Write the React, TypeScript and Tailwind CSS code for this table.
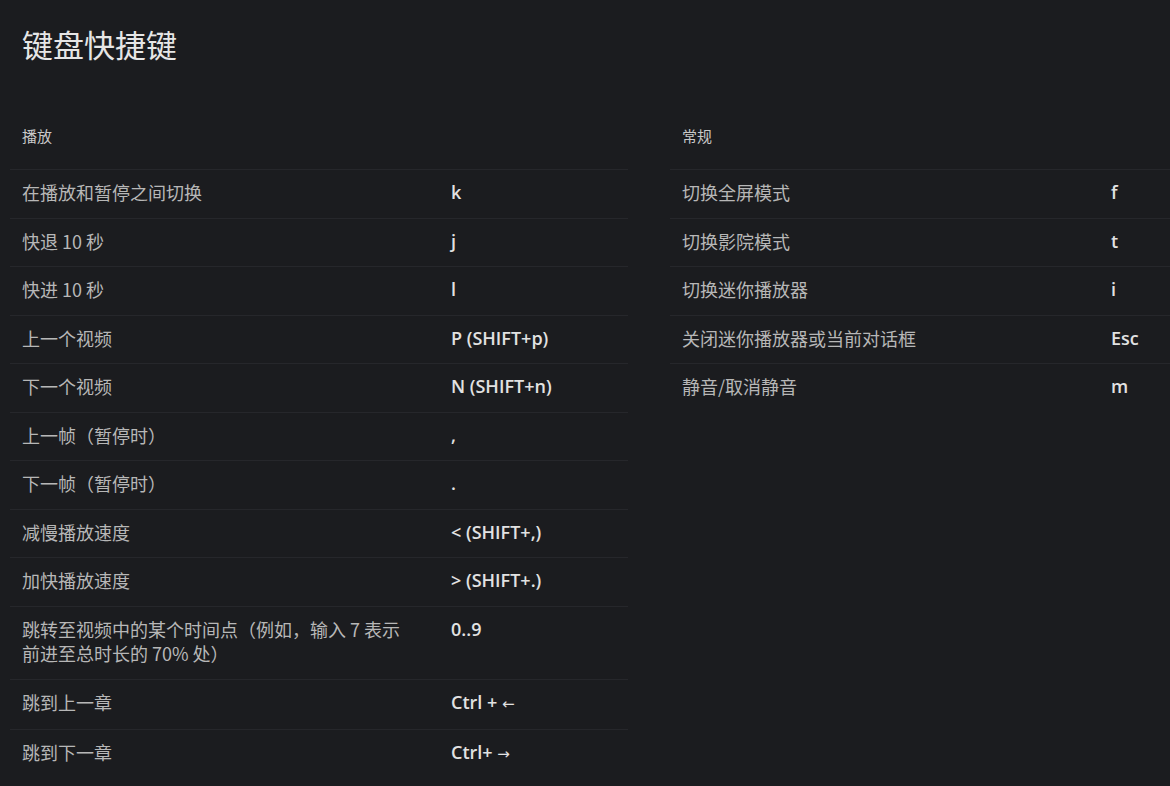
import React from 'react';

type Shortcut = { label: string; keys: string };

const playback: Shortcut[] = [
  { label: '在播放和暂停之间切换', keys: 'k' },
  { label: '快退 10 秒', keys: 'j' },
  { label: '快进 10 秒', keys: 'l' },
  { label: '上一个视频', keys: 'P (SHIFT+p)' },
  { label: '下一个视频', keys: 'N (SHIFT+n)' },
  { label: '上一帧（暂停时）', keys: ',' },
  { label: '下一帧（暂停时）', keys: '.' },
  { label: '减慢播放速度', keys: '< (SHIFT+,)' },
  { label: '加快播放速度', keys: '> (SHIFT+.)' },
  { label: '跳转至视频中的某个时间点（例如，输入 7 表示前进至总时长的 70% 处）', keys: '0..9' },
  { label: '跳到上一章', keys: 'Ctrl + ←' },
  { label: '跳到下一章', keys: 'Ctrl+ →' },
];

const general: Shortcut[] = [
  { label: '切换全屏模式', keys: 'f' },
  { label: '切换影院模式', keys: 't' },
  { label: '切换迷你播放器', keys: 'i' },
  { label: '关闭迷你播放器或当前对话框', keys: 'Esc' },
  { label: '静音/取消静音', keys: 'm' },
];

// arrows come out tiny in Open Sans, so give them their own font
const renderKeys = (keys: string) => {
  const m = keys.match(/^(.*?)([←→])$/);
  if (!m) return keys;
  return (
    <>
      {m[1]}
      <span className="font-['DejaVu_Sans',sans-serif] font-normal text-[15px]">{m[2]}</span>
    </>
  );
};

const ShortcutTable: React.FC<{ title: string; items: Shortcut[] }> = ({ title, items }) => (
  <div className="w-[618px] shrink-0">
    <h3 className="pl-3 text-[15px] leading-[20px] text-[#c8c8c8] mb-[23px]">{title}</h3>
    <div>
      {items.map((s) => (
        <div key={s.label} className="flex border-t border-[#26272b] pt-[10px] pb-[13px] pl-3">
          <div className="w-[429px] shrink-0 pr-10 text-[18px] leading-[24.5px] text-[#b7b7b7]">{s.label}</div>
          <div className="text-[18px] leading-[24.5px] font-semibold text-[#e2e2e2] font-['Open_Sans',sans-serif]">
            {renderKeys(s.keys)}
          </div>
        </div>
      ))}
    </div>
  </div>
);

export default function App() {
  return (
    <div className="min-h-screen w-full overflow-hidden bg-[#1b1c1f] font-['Noto_Sans_CJK_SC','Noto_Sans',sans-serif]">
      <div className="pl-[10px] pt-[24px]">
        <h1 className="pl-3 text-[31px] leading-[40px] text-[#e6e6e6] mb-[62px]">键盘快捷键</h1>
        <div className="flex gap-[42px]">
          <ShortcutTable title="播放" items={playback} />
          <ShortcutTable title="常规" items={general} />
        </div>
      </div>
    </div>
  );
}
